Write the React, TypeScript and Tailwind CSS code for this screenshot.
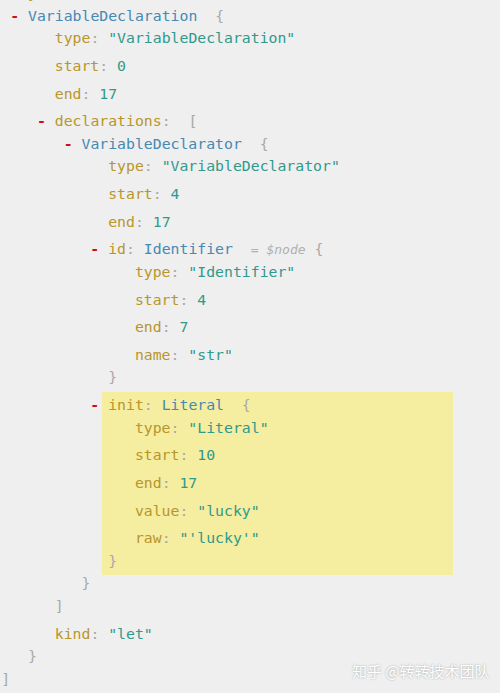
import React from "react";

const K = ({ children }: { children: React.ReactNode }) => (
  <span className="text-[#b8962c]">{children}</span>
);
const S = ({ children }: { children: React.ReactNode }) => (
  <span className="text-[#2f9a8c]">{children}</span>
);
const T = ({ children }: { children: React.ReactNode }) => (
  <span className="text-[#4689b3]">{children}</span>
);
const G = ({ children }: { children: React.ReactNode }) => (
  <span className="text-[#a9a9a9]">{children}</span>
);
const Dash = () => <span className="text-[#cc1018] font-bold">- </span>;

const Line = ({ children, dash }: { children: React.ReactNode; dash?: boolean }) => (
  <div className={"h-[22.5px] leading-[22.5px] whitespace-pre " + (dash ? "-ml-[2ch]" : "")}>
    {dash && <Dash />}
    {children}
  </div>
);

const Prop = ({ k, v }: { k: string; v: string }) => (
  <Line>
    <K>{k}</K>
    <G>: </G>
    <S>{v}</S>
  </Line>
);

const Body = ({ children }: { children: React.ReactNode }) => (
  <div className="flex flex-col gap-[5.2px] pl-[3ch]">{children}</div>
);

export default function App() {
  return (
    <div className="relative w-[500px] h-[693px] overflow-hidden bg-[#efefef]">
      <div
        className="flex flex-col -mt-[17.75px] pl-[1.3px] text-[14.8px]"
        style={{ fontFamily: '"DejaVu Sans Mono", monospace' }}
      >
        <Line>
          <K>body</K>
          <G>:  [</G>
        </Line>
        <Body>
          <div className="flex flex-col">
            <Line dash>
              <T>VariableDeclaration</T>
              <G>  {"{"}</G>
            </Line>
            <Body>
              <Prop k="type" v={'"VariableDeclaration"'} />
              <Prop k="start" v="0" />
              <Prop k="end" v="17" />
              <div className="flex flex-col">
                <Line dash>
                  <K>declarations</K>
                  <G>:  [</G>
                </Line>
                <Body>
                  <div className="flex flex-col">
                    <Line dash>
                      <T>VariableDeclarator</T>
                      <G>  {"{"}</G>
                    </Line>
                    <Body>
                      <Prop k="type" v={'"VariableDeclarator"'} />
                      <Prop k="start" v="4" />
                      <Prop k="end" v="17" />
                      <div className="flex flex-col">
                        <Line dash>
                          <K>id</K>
                          <G>: </G>
                          <T>Identifier</T>
                          <G>  </G>
                          <span className="text-[#b0b0b0] italic text-[13px]">= $node</span>
                          <G> {"{"}</G>
                        </Line>
                        <Body>
                          <Prop k="type" v={'"Identifier"'} />
                          <Prop k="start" v="4" />
                          <Prop k="end" v="7" />
                          <Prop k="name" v={'"str"'} />
                        </Body>
                        <Line>
                          <G>{"}"}</G>
                        </Line>
                      </div>
                      <div className="flex flex-col w-[351px] -ml-[6.4px] pl-[6.4px] -mt-[2px] pt-[2px] -mb-[3px] pb-[3px] bg-[#f5ed9f]">
                        <Line dash>
                          <K>init</K>
                          <G>: </G>
                          <T>Literal</T>
                          <G>  {"{"}</G>
                        </Line>
                        <Body>
                          <Prop k="type" v={'"Literal"'} />
                          <Prop k="start" v="10" />
                          <Prop k="end" v="17" />
                          <Prop k="value" v={'"lucky"'} />
                          <Prop k="raw" v={`"'lucky'"`} />
                        </Body>
                        <Line>
                          <G>{"}"}</G>
                        </Line>
                      </div>
                    </Body>
                    <Line>
                      <G>{"}"}</G>
                    </Line>
                  </div>
                </Body>
                <Line>
                  <G>]</G>
                </Line>
              </div>
              <Prop k="kind" v={'"let"'} />
            </Body>
            <Line>
              <G>{"}"}</G>
            </Line>
          </div>
        </Body>
        <Line>
          <G>]</G>
        </Line>
      </div>
      <div
        className="absolute left-[352px] top-[661px] text-[15px] leading-[20px] text-white whitespace-nowrap [text-shadow:0_0_2px_rgba(0,0,0,0.35)]"
        style={{ fontFamily: '"Noto Sans CJK SC", "Noto Sans", sans-serif' }}
      >
        知乎 @转转技术团队
      </div>
    </div>
  );
}
